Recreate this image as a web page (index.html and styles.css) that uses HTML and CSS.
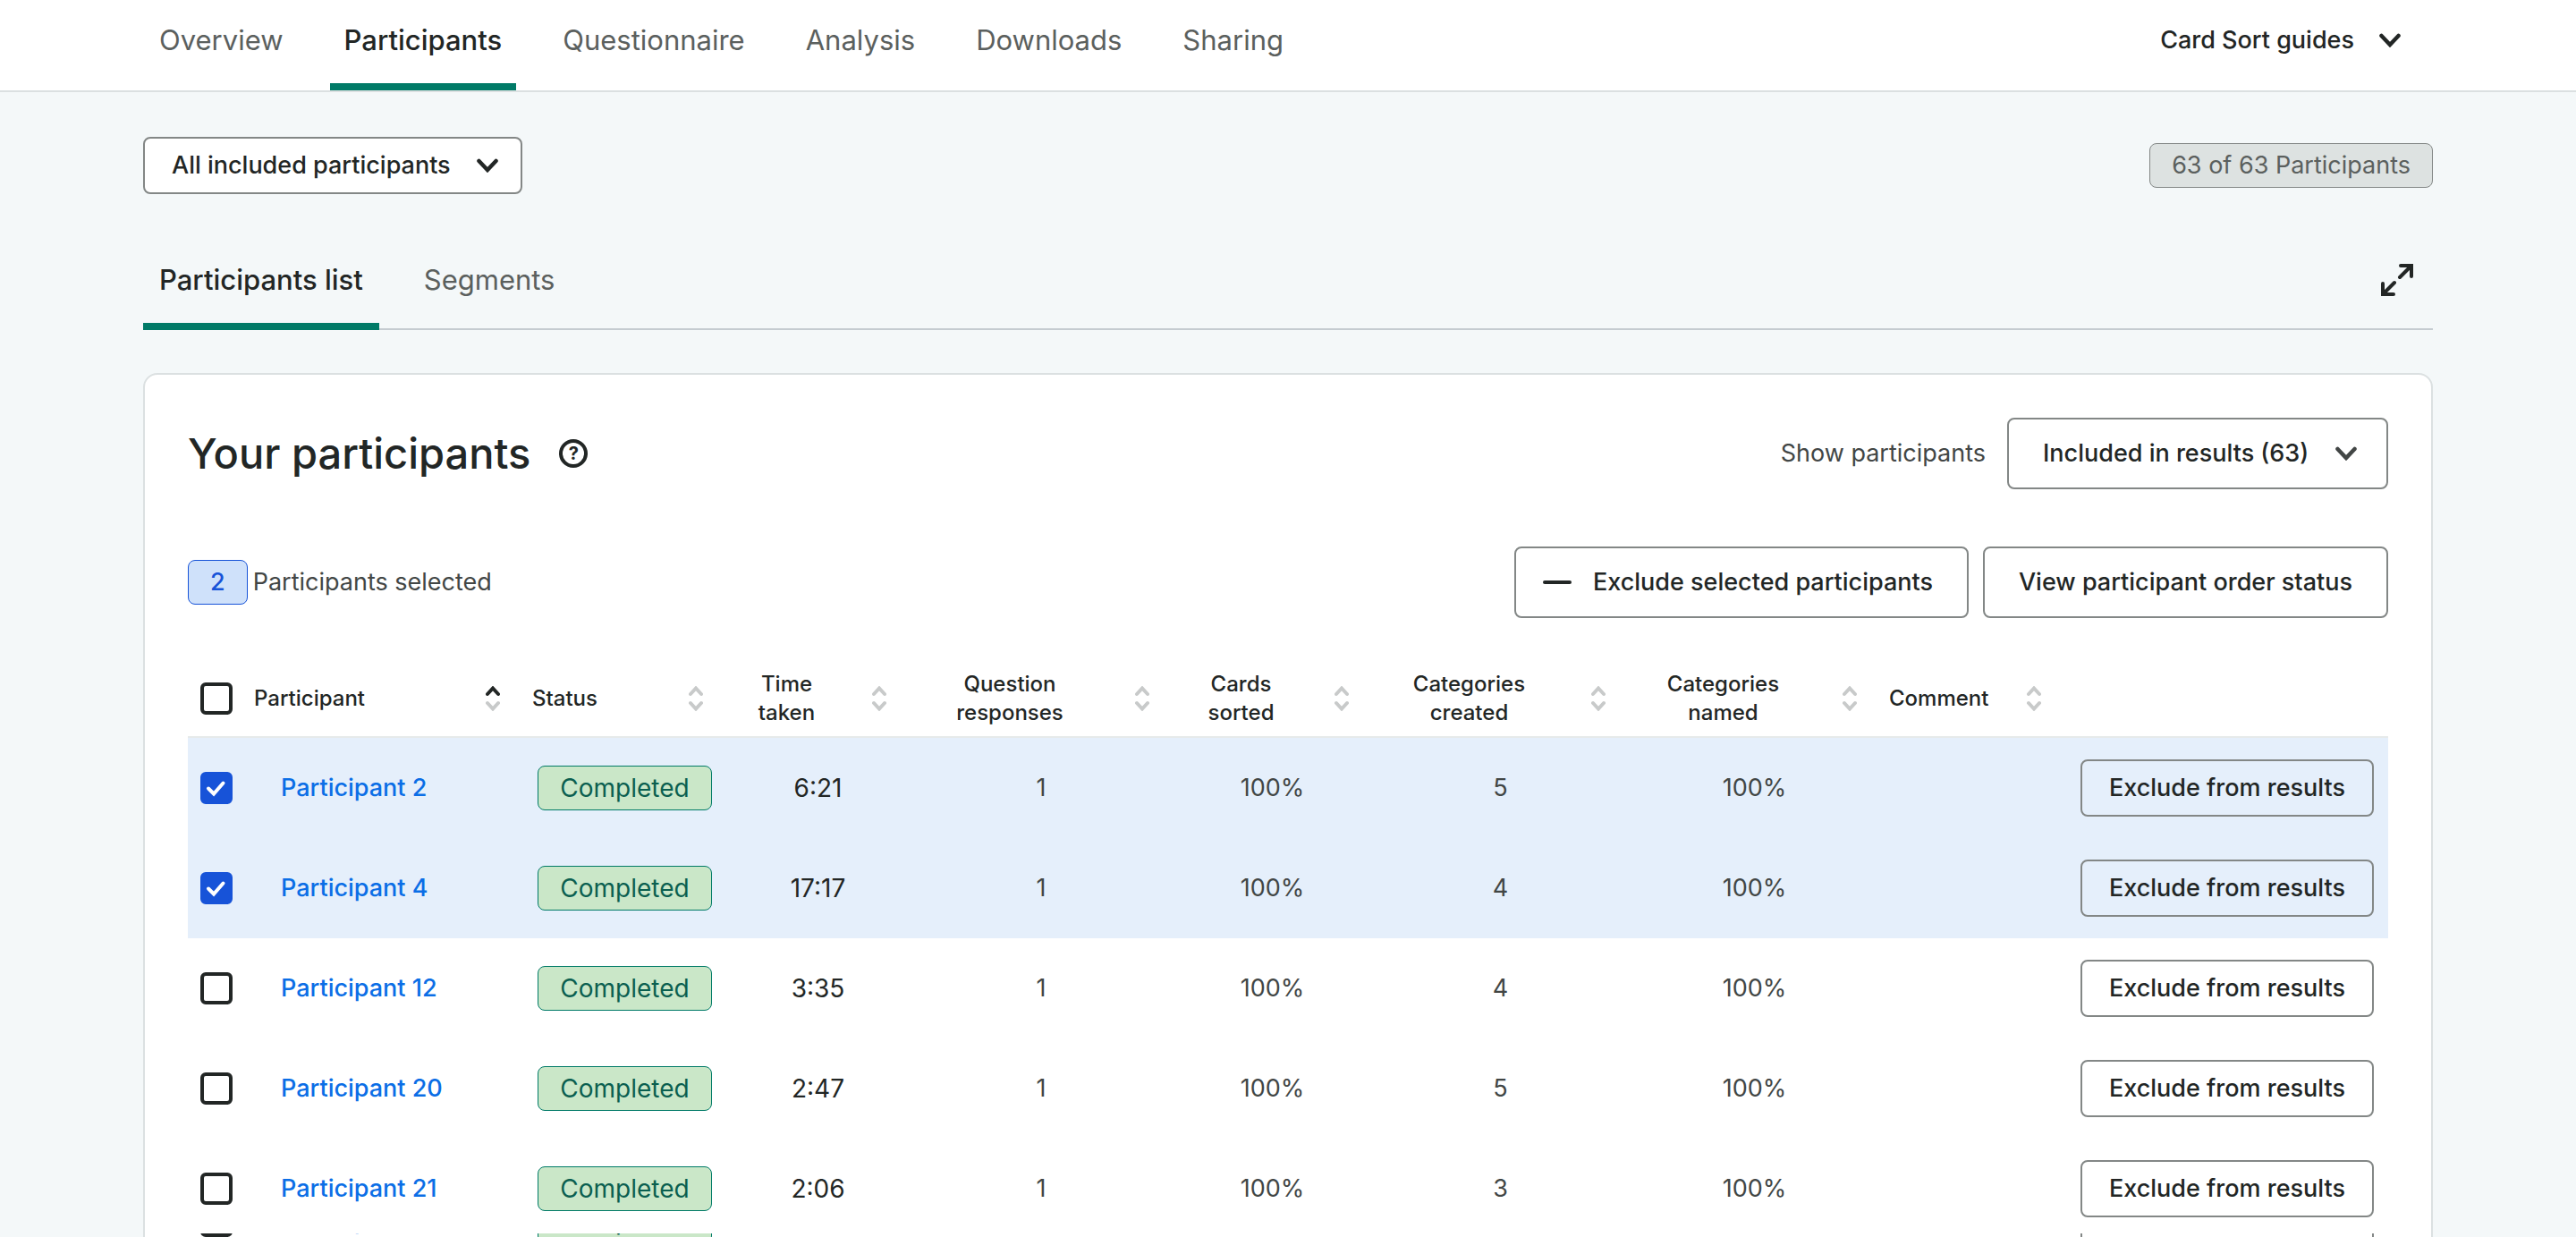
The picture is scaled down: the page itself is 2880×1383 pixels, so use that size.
FILE: index.html
```html
<!DOCTYPE html>
<html lang="en">
<head>
<meta charset="utf-8">
<meta name="viewport" content="width=device-width, initial-scale=1">
<title>Participants</title>
<link rel="stylesheet" href="styles.css">
</head>
<body>
<svg class="sprite" aria-hidden="true">
  <symbol id="chevron" viewBox="0 0 24 16"><path d="M2.500 3L12 13l9.500-10" fill="none" stroke="currentColor" stroke-width="4.500" stroke-linecap="round" stroke-linejoin="miter"/></symbol>
  <symbol id="check" viewBox="0 0 36 36"><path d="M9 18.500l6 6 10.500-12" fill="none" stroke="currentColor" stroke-width="4" stroke-linecap="round"/></symbol>
  <symbol id="sort" viewBox="0 0 16 28"><path class="up" d="M2 9l6-6.500 6 6.500"/><path class="down" d="M2 19l6 6.500 6-6.500"/></symbol>
</svg>

<header class="topbar">
  <nav class="nav">
    <a class="tab" href="#overview">Overview</a>
    <a class="tab active" href="#participants" aria-current="page">Participants</a>
    <a class="tab" href="#questionnaire">Questionnaire</a>
    <a class="tab" href="#analysis">Analysis</a>
    <a class="tab" href="#downloads">Downloads</a>
    <a class="tab" href="#sharing">Sharing</a>
  </nav>
  <button class="guides" type="button">Card Sort guides <svg class="chevron"><use href="#chevron"/></svg></button>
</header>

<main class="page">
  <div class="filters">
    <div class="select select-small">
      <select aria-label="Participant filter"><option>All included participants</option></select>
      <svg class="chevron"><use href="#chevron"/></svg>
    </div>
    <span class="badge badge-grey">63 of 63 Participants</span>
  </div>

  <div class="subtabs">
    <nav class="subnav">
      <a class="tab active" href="#list">Participants list</a>
      <a class="tab" href="#segments">Segments</a>
    </nav>
    <button class="expand" type="button" aria-label="Expand">
      <svg viewBox="0 0 36 36"><path d="M22 2h12v12M34 2L21 15M2 22v12h12M2 34L15 21" fill="none" stroke="currentColor" stroke-width="4" stroke-linecap="round"/></svg>
    </button>
  </div>

  <section class="card">
    <div class="card-row">
      <div class="heading">
        <h1>Your participants</h1>
        <button class="help" type="button" aria-label="Help">?</button>
      </div>
      <div class="show">
        <label for="show">Show participants</label>
        <div class="select">
          <select id="show"><option>Included in results (63)</option></select>
          <svg class="chevron"><use href="#chevron"/></svg>
        </div>
      </div>
    </div>

    <div class="card-row">
      <div class="selected"><span class="badge badge-blue">2</span>Participants selected</div>
      <div class="actions">
        <button class="button with-icon" type="button"><svg class="minus" viewBox="0 0 32 4"><path d="M2 2h28" stroke="currentColor" stroke-width="4" stroke-linecap="round"/></svg>Exclude selected participants</button>
        <button class="button" type="button">View participant order status</button>
      </div>
    </div>

    <table class="participants">
      <colgroup><col class="c-check"><col class="c-name"><col class="c-status"><col class="c-time"><col class="c-questions"><col class="c-sorted"><col class="c-created"><col class="c-named"><col class="c-comment"><col class="c-action"></colgroup>
      <thead>
        <tr>
          <th><label class="checkbox"><input type="checkbox" aria-label="Select all"><svg><use href="#check"/></svg></label></th>
          <th><button class="sort start" type="button"><span>Participant</span><svg class="ascending"><use href="#sort"/></svg></button></th>
          <th><button class="sort start" type="button"><span>Status</span><svg><use href="#sort"/></svg></button></th>
          <th><button class="sort" type="button"><span>Time<br>taken</span><svg><use href="#sort"/></svg></button></th>
          <th><button class="sort" type="button"><span>Question<br>responses</span><svg><use href="#sort"/></svg></button></th>
          <th><button class="sort" type="button"><span>Cards<br>sorted</span><svg><use href="#sort"/></svg></button></th>
          <th><button class="sort" type="button"><span>Categories<br>created</span><svg><use href="#sort"/></svg></button></th>
          <th><button class="sort" type="button"><span>Categories<br>named</span><svg><use href="#sort"/></svg></button></th>
          <th><button class="sort start" type="button"><span>Comment</span><svg><use href="#sort"/></svg></button></th>
          <th></th>
        </tr>
      </thead>
      <tbody>
        <tr class="picked">
          <td><label class="checkbox"><input type="checkbox" aria-label="Select Participant 2" checked><svg><use href="#check"/></svg></label></td>
          <td class="name"><a href="#p2">Participant 2</a></td><td><span class="badge badge-green">Completed</span></td><td class="time">6:21</td><td>1</td><td>100%</td><td>5</td><td>100%</td><td></td>
          <td class="action"><button class="button small" type="button">Exclude from results</button></td>
        </tr>
        <tr class="picked">
          <td><label class="checkbox"><input type="checkbox" aria-label="Select Participant 4" checked><svg><use href="#check"/></svg></label></td>
          <td class="name"><a href="#p4">Participant 4</a></td><td><span class="badge badge-green">Completed</span></td><td class="time">17:17</td><td>1</td><td>100%</td><td>4</td><td>100%</td><td></td>
          <td class="action"><button class="button small" type="button">Exclude from results</button></td>
        </tr>
        <tr>
          <td><label class="checkbox"><input type="checkbox" aria-label="Select Participant 12"><svg><use href="#check"/></svg></label></td>
          <td class="name"><a href="#p12">Participant 12</a></td><td><span class="badge badge-green">Completed</span></td><td class="time">3:35</td><td>1</td><td>100%</td><td>4</td><td>100%</td><td></td>
          <td class="action"><button class="button small" type="button">Exclude from results</button></td>
        </tr>
        <tr>
          <td><label class="checkbox"><input type="checkbox" aria-label="Select Participant 20"><svg><use href="#check"/></svg></label></td>
          <td class="name"><a href="#p20">Participant 20</a></td><td><span class="badge badge-green">Completed</span></td><td class="time">2:47</td><td>1</td><td>100%</td><td>5</td><td>100%</td><td></td>
          <td class="action"><button class="button small" type="button">Exclude from results</button></td>
        </tr>
        <tr class="last">
          <td><label class="checkbox"><input type="checkbox" aria-label="Select Participant 21"><svg><use href="#check"/></svg></label></td>
          <td class="name"><a href="#p21">Participant 21</a></td><td><span class="badge badge-green">Completed</span></td><td class="time">2:06</td><td>1</td><td>100%</td><td>3</td><td>100%</td><td></td>
          <td class="action"><button class="button small" type="button">Exclude from results</button></td>
        </tr>
      </tbody>
    </table>

    <div class="more">
      <table class="participants">
        <colgroup><col class="c-check"><col class="c-name"><col class="c-status"><col class="c-time"><col class="c-questions"><col class="c-sorted"><col class="c-created"><col class="c-named"><col class="c-comment"><col class="c-action"></colgroup>
        <tbody>
          <tr>
            <td><label class="checkbox"><input type="checkbox" aria-label="Select participant"><svg><use href="#check"/></svg></label></td>
            <td class="name"><a href="#next">Participant</a></td><td><span class="badge badge-green">Completed</span></td><td></td><td></td><td></td><td></td><td></td><td></td>
            <td class="action"><button class="button small" type="button">Exclude from results</button></td>
          </tr>
        </tbody>
      </table>
    </div>
  </section>
</main>
</body>
</html>
```
FILE: styles.css
```css
:root {
  --ink: #222625;
  --grey: #5b605e;
  --body: #424645;
  --border: #838786;
  --green: #007a67;
  --blue: #1753d8;
  --strong: 550;
}

* { box-sizing: border-box; }

body {
  margin: 0;
  height: 100vh;
  overflow: hidden;
  background: #f4f8f9;
  color: var(--ink);
  font: 400 27px/40px Inter, "Liberation Sans", sans-serif;
}

button, select {
  margin: 0;
  color: var(--ink);
  font: inherit;
  font-weight: var(--strong);
  cursor: pointer;
}

a { text-decoration: none; }
svg { display: block; flex: none; }
.sprite { position: absolute; width: 0; height: 0; }
.chevron { width: 24px; height: 16px; }

/* Top navigation */
.topbar {
  display: flex;
  justify-content: space-between;
  padding: 0 160px;
  background: #fff;
  border-bottom: 2px solid #dbe0e1;
}

.nav { display: flex; gap: 36px; padding-left: 2px; }

.tab {
  padding: 25px 16px 28px;
  border-bottom: 8px solid transparent;
  color: var(--grey);
  font-size: 31px;
}

.tab.active {
  border-color: var(--green);
  color: var(--ink);
  font-weight: var(--strong);
}

.guides {
  display: flex;
  align-items: center;
  align-self: flex-start;
  gap: 28px;
  padding: 25px 36px 0 0;
  border: 0;
  background: none;
}

/* Page */
.page { padding: 50px 160px 0; }

.filters {
  display: flex;
  align-items: center;
  justify-content: space-between;
}

.select { display: grid; align-items: center; }
.select > * { grid-area: 1 / 1; }
.select .chevron { justify-self: end; margin-right: 35px; pointer-events: none; }

.select select {
  height: 80px;
  padding: 0 86px 0 38px;
  border: 2px solid var(--border);
  border-radius: 8px;
  background: #fff;
  appearance: none;
}

.select-small select { height: 64px; padding: 0 78px 0 30px; }
.select-small .chevron { margin-right: 27px; }

.badge {
  display: inline-block;
  padding: 4px 24px;
  border: 1px solid;
  border-radius: 8px;
}

.badge-grey { background: #dde2e1; border-color: var(--border); color: var(--grey); }
.badge-blue { background: #cfe1fa; border-color: var(--blue); color: var(--blue); font-weight: 500; }

.badge-green {
  background: #cae7c8;
  border-color: var(--green);
  color: #0b5f50;
  font-size: 28px;
  vertical-align: middle;
}

.subtabs {
  display: flex;
  align-items: center;
  justify-content: space-between;
  margin-top: 48px;
  box-shadow: inset 0 -2px #c5ccd1;
}

.subnav { display: flex; gap: 32px; }
.subnav .tab { padding: 28px 18px; }

.expand {
  display: flex;
  padding: 0 22px 8px 0;
  border: 0;
  background: none;
}

.expand svg { width: 36px; height: 36px; }

/* Card */
.card {
  display: flow-root;
  margin-top: 48px;
  padding: 48px;
  border: 2px solid #dbe0e1;
  border-radius: 16px;
  background: #fff;
}

.card-row {
  display: flex;
  align-items: center;
  justify-content: space-between;
}

.card-row + .card-row { margin-top: 64px; }

.heading { display: flex; align-items: center; gap: 32px; }

h1 { margin: 0; font-size: 47px; font-weight: var(--strong); line-height: 64px; }

.help {
  width: 32px;
  height: 32px;
  padding: 0;
  border: 4px solid var(--ink);
  border-radius: 50%;
  background: none;
  font-size: 20px;
  font-weight: 700;
  line-height: 24px;
}

.show { display: flex; align-items: center; gap: 24px; color: var(--body); }
.selected { display: flex; align-items: center; gap: 6px; color: var(--body); }
.actions { display: flex; gap: 16px; }

.button {
  height: 80px;
  padding: 0 38px;
  border: 2px solid var(--border);
  border-radius: 8px;
  background: none;
  white-space: nowrap;
}

.with-icon { display: flex; align-items: center; gap: 24px; padding-left: 30px; }
.minus { width: 32px; height: 4px; }
.button.small { height: 64px; padding: 0 30px; vertical-align: middle; }

/* Participants table */
.participants {
  width: 100%;
  margin-top: 48px;
  border-collapse: separate;
  border-spacing: 0;
  table-layout: fixed;
}

.c-check { width: 64px; }
.c-name { width: 311px; }
.c-status { width: 227px; }
.c-time { width: 205px; }
.c-questions { width: 294px; }
.c-sorted { width: 223px; }
.c-created { width: 287px; }
.c-named { width: 281px; }
.c-comment { width: 206px; }
.c-action { width: 362px; }

th { height: 86px; padding: 0; border-bottom: 2px solid #e6eaea; }

.sort {
  display: flex;
  align-items: center;
  gap: 28px;
  width: 100%;
  padding: 0 26px 0 0;
  border: 0;
  background: none;
  font-size: 24px;
  font-weight: 500;
  line-height: 32px;
}

.sort span { flex: 1; }
.sort.start { padding-left: 10px; text-align: left; }
.sort svg { width: 16px; height: 28px; }

.up, .down { fill: none; stroke: #c8caca; stroke-width: 4; stroke-linecap: round; }
.up { stroke: var(--up, #c8caca); }
.sort .ascending { --up: var(--ink); }

td { height: 112px; padding: 24px 0; color: var(--body); text-align: center; }
.last td { height: 106px; padding-bottom: 18px; }
.picked td { background: #e5effb; }
td.time { color: var(--ink); font-size: 28px; }
td.name { padding-left: 40px; text-align: left; }
.name a { color: #0b6ee6; font-weight: var(--strong); }
td.action { padding-right: 16px; text-align: right; }

.checkbox { display: grid; width: 36px; margin: 0 auto; }
.checkbox > * { grid-area: 1 / 1; width: 36px; height: 36px; }
.checkbox svg { color: #fff; visibility: hidden; pointer-events: none; }
.checkbox :checked + svg { visibility: visible; }

.checkbox input {
  margin: 0;
  border: 4px solid var(--ink);
  border-radius: 6px;
  background: #fff;
  appearance: none;
}

.checkbox input:checked { border-color: var(--blue); background: var(--blue); }

/* Following row, scrolled partly behind the list above */
.more { overflow: hidden; }
.more .participants { margin-top: -70px; }
```
